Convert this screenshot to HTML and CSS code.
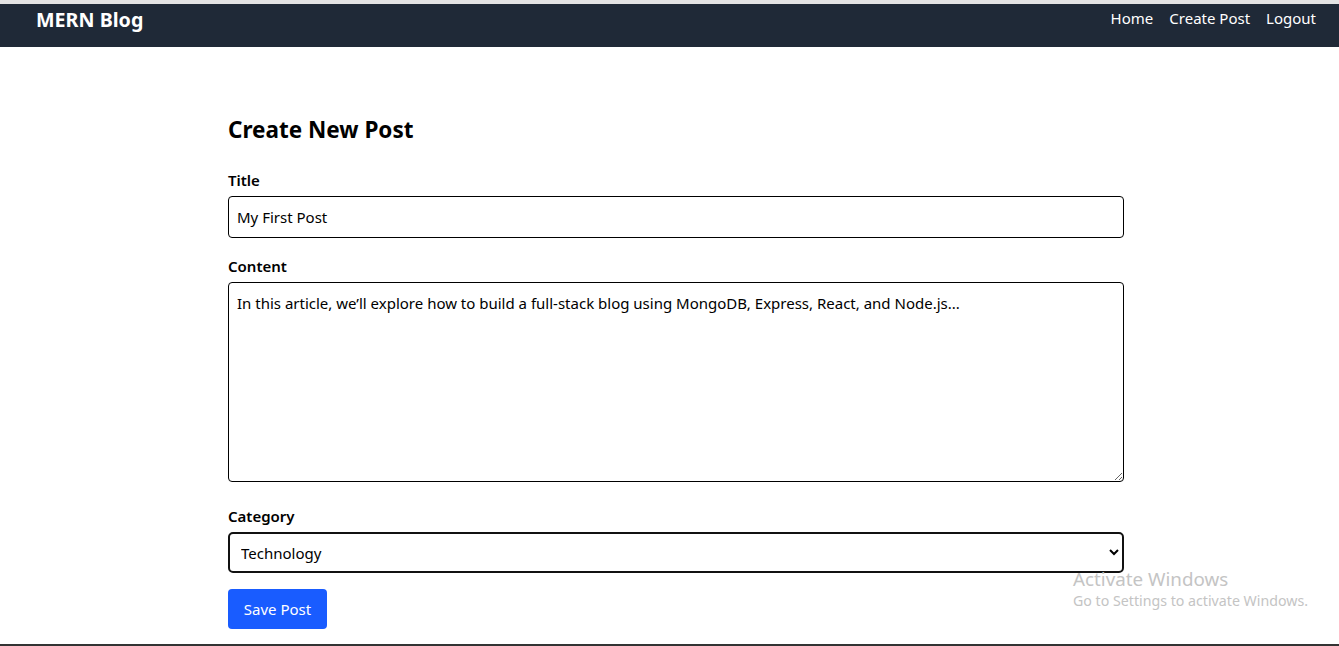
FILE: index.html
```html
<!DOCTYPE html>
<html lang="en">
<head>
<meta charset="utf-8">
<title>MERN Blog</title>
<link rel="stylesheet" href="styles.css">
</head>
<body>
<div class="page">
  <nav class="navbar">
    <a class="brand" href="#">MERN Blog</a>
    <div class="links">
      <a href="#">Home</a>
      <a href="#">Create Post</a>
      <a href="#">Logout</a>
    </div>
  </nav>
  <main class="main">
    <h1 class="heading">Create New Post</h1>
    <form class="form">
      <label class="label">Title</label>
      <input class="input" type="text" value="My First Post">
      <label class="label">Content</label>
      <textarea class="textarea">In this article, we’ll explore how to build a full-stack blog using MongoDB, Express, React, and Node.js...</textarea>
      <label class="label label-cat">Category</label>
      <select class="select">
        <option>Technology</option>
        <option>Lifestyle</option>
      </select>
      <button class="button" type="button">Save Post</button>
    </form>
  </main>
  <div class="watermark">
    <div class="wm-title">Activate Windows</div>
    <div class="wm-sub">Go to Settings to activate Windows.</div>
  </div>
</div>
</body>
</html>
```

FILE: styles.css
```css
* { box-sizing: border-box; }
html, body { margin: 0; padding: 0; }
body {
  font-family: "Noto Sans", "Open Sans", sans-serif;
  color: #000;
  background: #fff;
}
.page {
  height: 646px;
  border-top: 4px solid #e3e3e3;
  border-bottom: 2px solid #333;
  overflow: hidden;
  position: relative;
}
.navbar {
  height: 43px;
  background: #1f2937;
  display: flex;
  align-items: center;
  justify-content: space-between;
  padding: 0 23px 0 36px;
}
.brand {
  color: #fff;
  font-weight: 700;
  font-size: 19.7px;
  text-decoration: none;
  margin-top: -13px;
}
.links {
  display: flex;
  gap: 16px;
  margin-top: -15px;
}
.links a {
  color: #fff;
  text-decoration: none;
  font-size: 15px;
}
.main {
  width: 896px;
  margin-left: 228px;
  padding-top: 67px;
}
.heading {
  margin: 0 0 22px;
  font-size: 22.5px;
  line-height: 32px;
  font-weight: 700;
}
.form {
  display: flex;
  flex-direction: column;
}
.label {
  display: block;
  font-size: 15px;
  font-weight: 600;
  line-height: 24px;
  margin-bottom: 4px;
}
.input {
  display: block;
  width: 100%;
  height: 42px;
  border: 1px solid #000;
  border-radius: 4px;
  padding: 8px;
  font: inherit;
  font-size: 15px;
  margin-bottom: 16px;
}
.textarea {
  display: block;
  width: 100%;
  height: 200px;
  border: 1px solid #000;
  border-radius: 4px;
  padding: 10px 8px 8px;
  font: inherit;
  font-size: 15px;
  resize: vertical;
  margin-bottom: 22px;
}
.select {
  display: block;
  width: 100%;
  height: 41px;
  border: 2px solid #111;
  border-radius: 5px;
  padding: 0 7px;
  font: inherit;
  font-size: 15px;
  background: #fff;
  margin-bottom: 16px;
}
.button {
  align-self: flex-start;
  width: 99px;
  height: 40px;
  background: #195cff;
  color: #fff;
  border: none;
  border-radius: 4px;
  font: inherit;
  font-size: 15px;
}
.watermark {
  position: absolute;
  left: 1073px;
  top: 563px;
  color: #c4c4c4;
}
.wm-title { font-size: 18.8px; line-height: 24px; }
.wm-sub { font-size: 14.2px; line-height: 20px; }
```
